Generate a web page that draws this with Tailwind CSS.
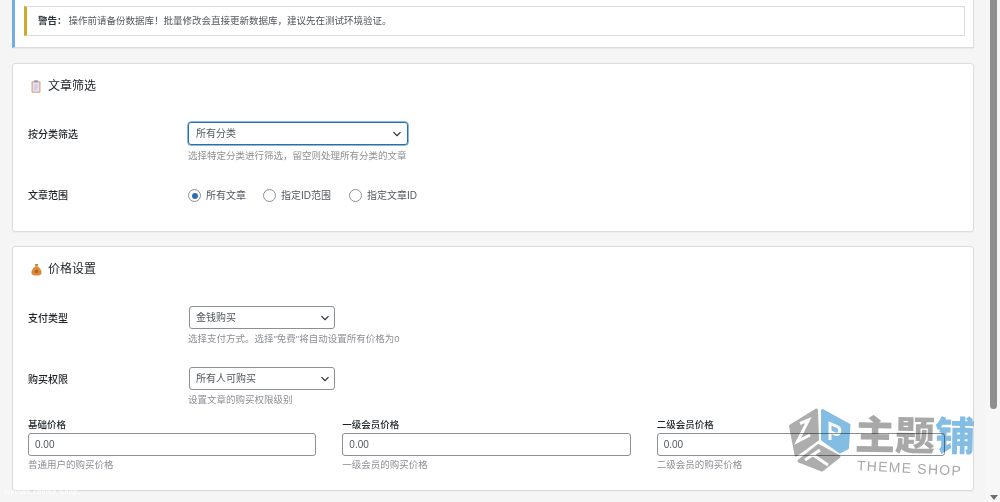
<!DOCTYPE html>
<html lang="zh-CN">
<head>
<meta charset="utf-8">
<script src="https://cdn.jsdelivr.net/npm/@tailwindcss/browser@4"></script>
</head>
<body class="bg-[#f5f5f6] overflow-hidden">
<div class="relative flex h-[502px] w-[1000px] overflow-hidden font-['Liberation_Sans','Noto_Sans_CJK_SC',sans-serif] text-[10px] text-[#2c3338]">
  <main class="w-[986px] shrink-0 pl-3 pr-3 blur-[0.4px]">

    <section class="h-12 border border-t-0 border-l-0 border-[#dcdcde] border-l-[3px] border-l-[#72aee6] bg-white pl-[9px] pr-[8px] pt-[6px] shadow-[0_1px_1px_rgba(0,0,0,0.04)]">
      <div class="flex h-[30px] items-center border border-[#dcdcde] border-l-[3px] border-l-[#d0a92c] pl-[11px] text-[9.5px] leading-none">
        <strong class="font-bold">警告：</strong>
        <span class="ml-[2px] text-[#50575e]">操作前请备份数据库！批量修改会直接更新数据库，建议先在测试环境验证。</span>
      </div>
    </section>

    <section class="mt-[15px] h-[169px] rounded-[3px] border border-[#dcdcde] bg-white pl-[15px] pt-[14px] shadow-[0_1px_1px_rgba(0,0,0,0.04)]">
      <h2 class="flex h-4 items-center gap-[7px] text-xs font-normal leading-4 text-[#1d2327]">
        <svg class="ml-[3px]" width="10" height="13" viewBox="0 0 10 13"><rect x="0.5" y="1.2" width="9" height="11.5" rx="1" fill="#d9a48c"/><rect x="1.7" y="2.4" width="6.6" height="9.2" fill="#e6e1ee"/><path d="M3 5h4M3 7h4M3 9h3" stroke="#b9b3cf" stroke-width=".8"/><rect x="3" y="0.3" width="4" height="2" rx=".5" fill="#9a9aa5"/></svg>
        <span>文章筛选</span>
      </h2>
      <div class="mt-[28px] flex">
        <label class="w-40 shrink-0 pt-[6px] text-[10px] font-medium leading-[14px] text-[#1d2327]">按分类筛选</label>
        <div>
          <div class="relative flex h-[23px] w-[220px] items-center rounded-[3px] border border-[#2271b1] pl-[7px] text-[#50575e] shadow-[0_0_0_0.5px_#2271b1]">
            所有分类
            <svg class="absolute right-[5px] top-[6px]" width="10" height="10" viewBox="0 0 10 10" fill="none" stroke="#1d2327" stroke-width="1.1"><path d="M1.5 3.2 5 6.7l3.5-3.5"/></svg>
          </div>
          <p class="mt-[4px] text-[9.5px] leading-[14px] text-[#8c8f94]">选择特定分类进行筛选，留空则处理所有分类的文章</p>
        </div>
      </div>
      <div class="mt-[25px] flex items-center">
        <span class="w-40 shrink-0 text-[10px] font-medium leading-[14px] text-[#1d2327]">文章范围</span>
        <div class="flex items-center text-[#50575e]">
          <span class="flex h-[13px] w-[13px] items-center justify-center rounded-full border border-[#8c8f94]"><span class="h-[6px] w-[6px] rounded-full bg-[#2e6fb0]"></span></span>
          <span class="ml-[5px]">所有文章</span>
          <span class="ml-[17px] h-[13px] w-[13px] rounded-full border border-[#8c8f94]"></span>
          <span class="ml-[5px]">指定ID范围</span>
          <span class="ml-[18px] h-[13px] w-[13px] rounded-full border border-[#8c8f94]"></span>
          <span class="ml-[5px]">指定文章ID</span>
        </div>
      </div>
    </section>

    <section class="mt-[14px] h-[245px] rounded-[3px] border border-[#dcdcde] bg-white pl-[15px] pr-[28px] pt-[14px] shadow-[0_1px_1px_rgba(0,0,0,0.04)]">
      <h2 class="flex h-4 items-center gap-[7px] text-xs font-normal leading-4 text-[#1d2327]">
        <svg class="ml-[3px]" width="11" height="13" viewBox="0 0 11 13"><path d="M3.800 1h3.400L6.600 3.600H4.400z" fill="#c9863c"/><path d="M4.300 3.600h2.400C9 5.300 10.600 7.500 10.600 9.400c0 2.400-2.200 3.200-5.100 3.200S.4 11.800.4 9.400C.4 7.500 2 5.300 4.300 3.600z" fill="#dc8a3a"/><circle cx="5.500" cy="8.600" r="1.800" fill="#b5622a"/></svg>
        <span class="-ml-[1px]">价格设置</span>
      </h2>
      <div class="mt-[29px] flex">
        <label class="w-[161px] shrink-0 pt-[6px] text-[10px] font-medium leading-[14px] text-[#1d2327]">支付类型</label>
        <div>
          <div class="relative flex h-[23px] w-[146px] items-center rounded-[3px] border border-[#8c8f94] pl-[6px] text-[#50575e]">
            金钱购买
            <svg class="absolute right-[4px] top-[6px]" width="10" height="10" viewBox="0 0 10 10" fill="none" stroke="#1d2327" stroke-width="1.1"><path d="M1.5 3.2 5 6.7l3.5-3.5"/></svg>
          </div>
          <p class="mt-[3px] -ml-[1px] text-[9.5px] leading-[14px] text-[#8c8f94]">选择支付方式。选择"免费"将自动设置所有价格为0</p>
        </div>
      </div>
      <div class="mt-[21px] flex">
        <label class="w-[161px] shrink-0 pt-[6px] text-[10px] font-medium leading-[14px] text-[#1d2327]">购买权限</label>
        <div>
          <div class="relative flex h-[23px] w-[146px] items-center rounded-[3px] border border-[#8c8f94] pl-[6px] text-[#50575e]">
            所有人可购买
            <svg class="absolute right-[4px] top-[6px]" width="10" height="10" viewBox="0 0 10 10" fill="none" stroke="#1d2327" stroke-width="1.1"><path d="M1.5 3.2 5 6.7l3.5-3.5"/></svg>
          </div>
          <p class="mt-[3px] -ml-[1px] text-[9.5px] leading-[14px] text-[#8c8f94]">设置文章的购买权限级别</p>
        </div>
      </div>
      <div class="mt-[11px] grid grid-cols-3 gap-x-[26px]">
        <div>
          <label class="block text-[9.5px] font-medium leading-[14px] text-[#1d2327]">基础价格</label>
          <div class="mt-[1px] flex h-[23px] items-center rounded-[3px] border border-[#8c8f94] pl-[6px] text-[#50575e]">0.00</div>
          <p class="mt-[2px] text-[9.5px] leading-[14px] text-[#8c8f94]">普通用户的购买价格</p>
        </div>
        <div>
          <label class="block text-[9.5px] font-medium leading-[14px] text-[#1d2327]">一级会员价格</label>
          <div class="mt-[1px] flex h-[23px] items-center rounded-[3px] border border-[#8c8f94] pl-[6px] text-[#50575e]">0.00</div>
          <p class="mt-[2px] text-[9.5px] leading-[14px] text-[#8c8f94]">一级会员的购买价格</p>
        </div>
        <div>
          <label class="block text-[9.5px] font-medium leading-[14px] text-[#1d2327]">二级会员价格</label>
          <div class="mt-[1px] flex h-[23px] items-center rounded-[3px] border border-[#8c8f94] pl-[6px] text-[#50575e]">0.00</div>
          <p class="mt-[2px] text-[9.5px] leading-[14px] text-[#8c8f94]">二级会员的购买价格</p>
        </div>
      </div>
    </section>
  </main>

  <aside class="flex w-[14px] shrink-0 flex-col items-center bg-[#f7f7f7] pl-[1px]">
    <div class="h-[409px] w-[7px] rounded-b-full bg-[#8f8f8f]"></div>
    <div class="mt-auto mb-[2px] h-0 w-0 border-x-[4px] border-t-[5px] border-x-transparent border-t-[#6e6e6e]"></div>
  </aside>

  <div class="absolute left-[785px] top-[403px] flex h-[75px] w-[195px] mix-blend-multiply blur-[0.4px]">
    <svg width="70" height="75" viewBox="0 0 70 75" class="shrink-0">
      <g stroke-width="3" stroke-linejoin="round">
        <path d="M31.500 7 32.500 36.500 11 52 5.500 23z" fill="#adadad" stroke="#adadad"/>
        <path d="M37.500 7.500 64 22 62.500 45 55 49 37.500 36.500z" fill="#84bde4" stroke="#84bde4"/>
        <path d="M33.500 42.500 54 53.500 37 67 14 58z" fill="#adadad" stroke="#adadad"/>
      </g>
      <g fill="none" stroke="#ffffff" stroke-width="3">
        <path d="M15 20.500 23.500 17 12.500 38.500 25 32"/>
        <path d="M45 37V20.500l8 3.500c3 2 2 7.500-1.500 7.500L45.500 29"/>
        <path d="M20 57 35 47M28 52 43 62"/>
      </g>
    </svg>
    <div class="flex flex-col">
      <div class="mt-[12px] flex h-[42px] rotate-[1deg] items-center text-[40px] font-black leading-none text-[#a8a8a8]">主题<span class="text-[#84bde4]">铺</span></div>
      <div class="ml-[2px] mt-[3px] w-fit rotate-[3deg] text-[14px] leading-4 tracking-[1.25px] whitespace-nowrap text-[#a8a8a8]">THEME SHOP</div>
    </div>
  </div>

  <div class="absolute left-[5px] top-[488px] text-[7px] leading-[8px] tracking-[0.5px] text-white blur-[0.5px]">Upload Theme Shop</div>
</div>
</body>
</html>
